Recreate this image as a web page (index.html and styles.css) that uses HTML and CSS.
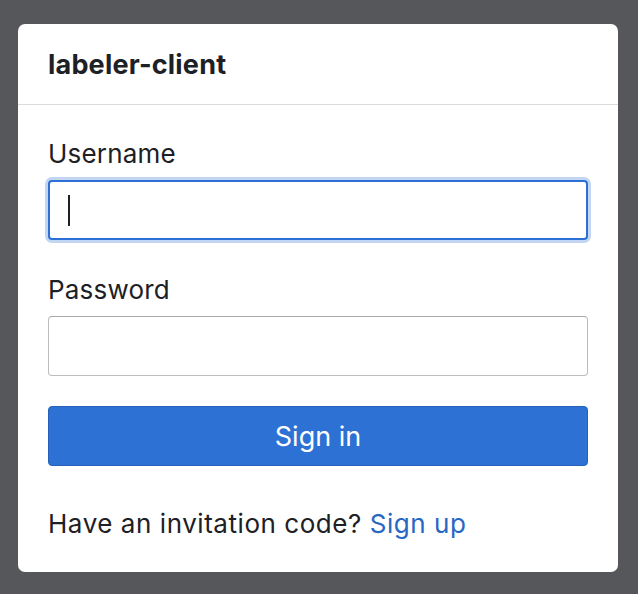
FILE: index.html
```html
<!DOCTYPE html>
<html lang="en">
<head>
<meta charset="utf-8">
<title>labeler-client</title>
<link rel="stylesheet" href="styles.css">
</head>
<body>
<div class="card">
  <div class="card-header">labeler-client</div>
  <form class="card-body">
    <label class="label" for="username">Username</label>
    <div class="field">
      <input class="input focused" id="username" type="text">
      <span class="caret"></span>
    </div>
    <label class="label label-second" for="password">Password</label>
    <div class="field">
      <input class="input" id="password" type="password">
    </div>
    <button class="btn" type="button">Sign in</button>
    <p class="signup">Have an invitation code? <a href="#" class="link">Sign up</a></p>
  </form>
</div>
</body>
</html>
```
FILE: styles.css
```css
html, body {
  margin: 0;
  padding: 0;
}
body {
  background: #55575a;
  font-family: Inter, "Noto Sans", "Liberation Sans", sans-serif;
  color: #1d2024;
  width: 638px;
  height: 594px;
  box-sizing: border-box;
  padding: 24px 20px 22px 18px;
}
.card {
  width: 600px;
  height: 548px;
  background: #ffffff;
  border-radius: 7px;
  box-sizing: border-box;
  display: flex;
  flex-direction: column;
}
.card-header {
  height: 81px;
  box-sizing: border-box;
  border-bottom: 1px solid #dcdcdc;
  padding: 0 30px;
  display: flex;
  align-items: center;
  font-size: 27px;
  font-weight: 700;
  letter-spacing: 0.2px;
  padding-top: 1px;
}
.card-body {
  display: flex;
  flex-direction: column;
  padding: 32px 30px 0 30px;
  margin: 0;
}
.label {
  font-size: 26px;
  line-height: 33px;
  margin-bottom: 10px;
  letter-spacing: 0.2px;
}
.label-second {
  margin-top: 33px;
}
.field {
  position: relative;
}
.input {
  display: block;
  width: 100%;
  height: 60px;
  box-sizing: border-box;
  border: 1px solid #bdbdbd;
  border-top-color: #a8a8a8;
  border-radius: 4px;
  background: #fff;
  margin: 0;
  padding: 0 18px;
  font-size: 26px;
  font-family: inherit;
  outline: none;
}
.input.focused {
  border: 2px solid #2c6fd5;
  box-shadow: 0 0 0 3px #c2d5f3;
}
.caret {
  position: absolute;
  left: 20px;
  top: 15px;
  width: 2px;
  height: 31px;
  background: #1d2024;
}
.btn {
  margin-top: 30px;
  height: 60px;
  background: #2c71d3;
  border: 1px solid #2561b9;
  border-radius: 4px;
  color: #ffffff;
  font-family: inherit;
  font-size: 27px;
  padding: 0;
}
.signup {
  margin: 41px 0 0 0;
  font-size: 26px;
  letter-spacing: 0.55px;
  line-height: 33px;
}
.link {
  color: #2767c4;
  text-decoration: none;
}
```
